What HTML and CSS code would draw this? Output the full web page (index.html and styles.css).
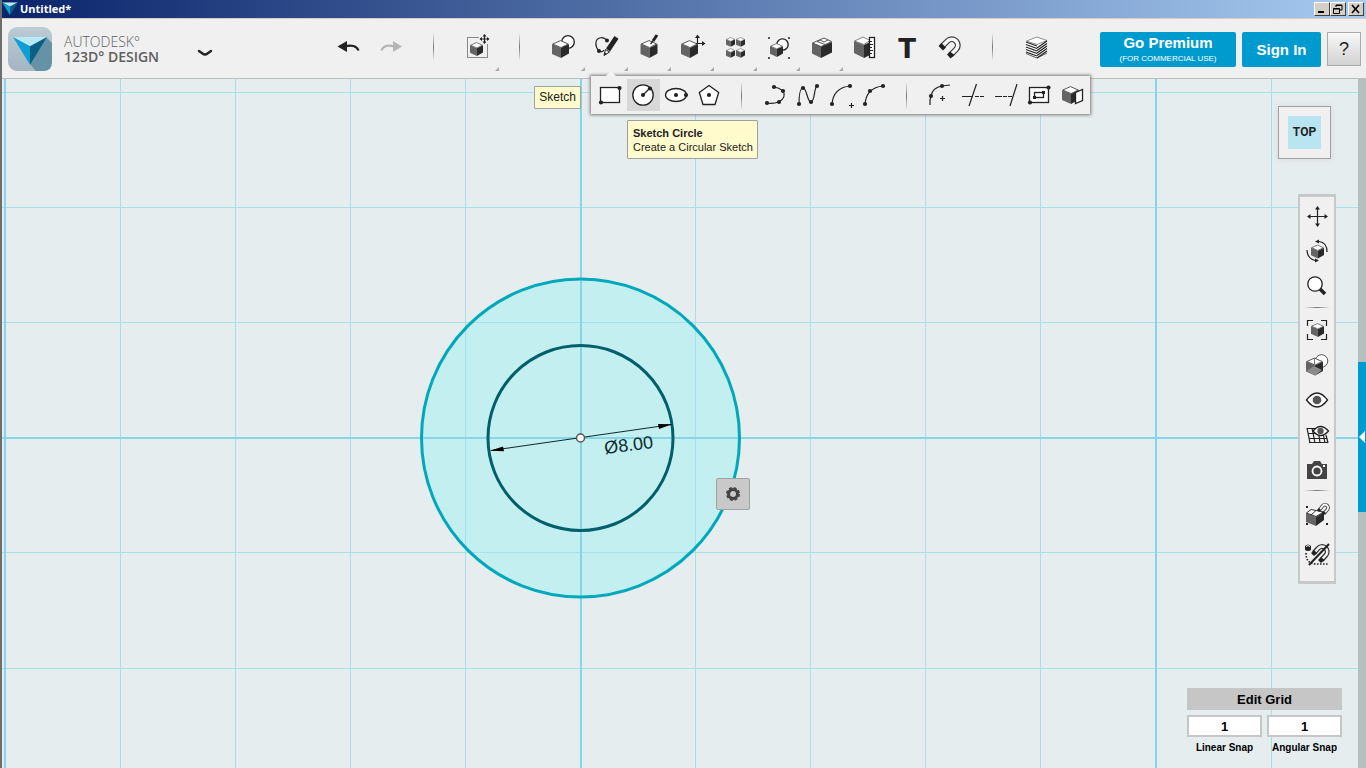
FILE: index.html
```html
<!DOCTYPE html>
<html lang="en">
<head>
<meta charset="utf-8">
<title>Untitled*</title>
<link rel="stylesheet" href="styles.css">
</head>
<body>
<svg class="sprite" aria-hidden="true">
  <defs>
    <symbol id="cube" viewBox="0 0 17 18">
      <path d="M0 4 9 8V18L0 14Z" fill="#646464"/>
      <path d="M9 8 17 4V13.500L9 18Z" fill="#2a2a2a"/>
      <path d="M.8 4 8.500.6 16.200 4 9 7.600Z" fill="#fff" stroke="#444" stroke-width=".9"/>
    </symbol>
    <symbol id="gem" viewBox="0 0 44 44">
      <path d="M0 0H44L22 12Z" fill="#b9e8f7"/>
      <path d="M0 0 22 12V36Z" fill="#0c9fd3"/>
      <path d="M44 0 22 12V36Z" fill="#0b5f84"/>
    </symbol>
    <linearGradient id="tile" x1="0" y1="0" x2="0" y2="1">
      <stop offset="0" stop-color="#bccbd5"/><stop offset="1" stop-color="#a3b5c1"/>
    </linearGradient>
  </defs>
</svg>

<div class="window">
  <header class="titlebar">
    <svg class="title-gem" viewBox="0 0 44 37" aria-hidden="true"><use href="#gem" width="44" height="44"/></svg>
    <span class="title">Untitled*</span>
    <div class="win-buttons">
      <button class="win" aria-label="Minimize"><svg viewBox="0 0 12 10"><path d="M2 8H8" stroke="#000" stroke-width="2"/></svg></button>
      <button class="win" aria-label="Restore"><svg viewBox="0 0 12 10"><path d="M4 3V1H10V6H8M4 1.500H10" fill="none" stroke="#000"/><path d="M1.500 4.500H7.500V9.500H1.500ZM1.500 5H7.500" fill="none" stroke="#000"/></svg></button>
      <button class="win win-close" aria-label="Close"><svg viewBox="0 0 12 10"><path d="M2 1 9 9M9 1 2 9" stroke="#000" stroke-width="1.600"/></svg></button>
    </div>
  </header>

  <div class="toolbar">
    <div class="brand">
      <svg class="logo" viewBox="0 0 44 44" aria-hidden="true">
        <rect width="44" height="44" rx="9" fill="url(#tile)"/>
        <path d="M38 10 44 16V35Q44 44 35 44H28L22 37Z" fill="#6593a5"/>
        <use href="#gem" x="5" y="10" width="34" height="34"/>
      </svg>
      <div class="brand-text">
        <span class="brand-top">AUTODESK°</span>
        <span class="brand-main">123D° DESIGN</span>
      </div>
      <button class="chevron" aria-label="Main menu"><svg viewBox="0 0 16 8"><path d="M2 2 5.500 4.500Q8 6.500 10.500 4.500L14 2" fill="none" stroke="#222" stroke-width="2.400" stroke-linecap="round"/></svg></button>
    </div>

    <nav class="tools" aria-label="Tools">
      <button class="tool" aria-label="Undo"><svg viewBox="0 0 33 33"><path d="M13 15.500C19 13.500 25 15 26.500 19.500" class="k2"/><path d="M5.500 15.500 15 10V21Z" class="f"/></svg></button>
      <button class="tool dim" aria-label="Redo"><svg viewBox="0 0 33 33"><path d="M19 15.500C13 13.500 8 15 6.500 19.500" class="k2"/><path d="M27 15.500 18 10V21Z" class="f"/></svg></button>
      <span class="rule"></span>
      <button class="tool more" aria-label="Transform"><svg viewBox="0 0 33 33"><rect x="6.500" y="6.500" width="20" height="20" fill="none" stroke="#222" stroke-dasharray="1 1"/><path d="M18 2H29V13H18Z" fill="#f0f0f0"/><use href="#cube" x="9" y="11" width="13" height="14"/><path d="M23.500 4V12M19.500 8H27.500" class="k"/><path d="M23.500 3 25.500 5.500H21.500ZM23.500 13 25.500 10.500H21.500ZM18.500 8 21 6V10ZM28.500 8 26 6V10Z" class="f"/></svg></button>
      <span class="rule"></span>
      <button class="tool more" aria-label="Primitives"><svg viewBox="0 0 33 33"><circle cx="21" cy="11" r="6.300" class="w"/><use href="#cube" x="5" y="9" width="17" height="18"/></svg></button>
      <div class="tool-slot">
        <button class="tool more" aria-label="Sketch"><svg viewBox="0 0 33 33"><path d="M17 10C14 5 7 6 6 11C5.500 15 7 18 9 20C11 21 13 21 14 19" class="k"/><circle cx="17" cy="9.500" r="2" class="f"/><circle cx="9" cy="20" r="2" class="f"/><path d="M14 24.500 15.500 18.500 19.500 21Z" fill="#fff" stroke="#222"/><path d="M14 24.500 14.800 21.500 17 23ZM16 17.500 24.500 5 28.500 7.800 20 20.500Z" class="f"/></svg></button>
        <span class="tip tip-sketch" role="tooltip">Sketch</span>
        <div class="submenu" role="toolbar" aria-label="Sketch tools">
          <button class="sub" aria-label="Sketch Rectangle"><svg viewBox="0 0 33 33"><rect x="6.500" y="8.500" width="19" height="15" class="w"/><circle cx="25.500" cy="9" r="2.100" class="f"/><circle cx="7" cy="23.500" r="2.100" class="f"/></svg></button>
          <button class="sub active" aria-label="Sketch Circle"><svg viewBox="0 0 33 33"><circle cx="16" cy="16" r="10.200" class="w"/><path d="M16 16 22.500 9.500" class="k"/><circle cx="16" cy="16" r="2.100" class="f"/><circle cx="23" cy="9.500" r="2.100" class="f"/></svg></button>
          <button class="sub" aria-label="Sketch Ellipse"><svg viewBox="0 0 33 33"><ellipse cx="16" cy="16" rx="10.500" ry="6.500" class="w"/><circle cx="16" cy="16" r="2.100" class="f"/><circle cx="26" cy="16" r="2.100" class="f"/></svg></button>
          <button class="sub" aria-label="Sketch Polygon"><svg viewBox="0 0 33 33"><path d="M16 6.500 25.700 13.500 22 25.500H10L6.300 13.500Z" class="w"/><circle cx="16" cy="16" r="2.100" class="f"/></svg></button>
          <span class="rule"></span>
          <button class="sub" aria-label="Polyline"><svg viewBox="0 0 33 33"><path d="M15 8Q20 8.500 24 12C26.500 16 25 20 20 23Q14 25 8 24" class="k"/><circle cx="15" cy="8" r="2.100" class="f"/><circle cx="24" cy="12" r="2.100" class="f"/><circle cx="20" cy="23" r="2.100" class="f"/><circle cx="8" cy="24" r="2.100" class="f"/></svg></button>
          <button class="sub" aria-label="Spline"><svg viewBox="0 0 33 33"><path d="M7 25C7 18 8 9 11 9C15 9 15 23 19 23C23 23 22 8 25 7" class="k"/><circle cx="7" cy="25" r="2.100" class="f"/><circle cx="11" cy="9" r="2.100" class="f"/><circle cx="19" cy="23" r="2.100" class="f"/><circle cx="25" cy="7" r="2.100" class="f"/></svg></button>
          <button class="sub" aria-label="Two Point Arc"><svg viewBox="0 0 33 33"><path d="M7 25C8 14 15 8 25 7M24 26.500H29M26.500 24V29" class="k"/><circle cx="7" cy="25" r="2.100" class="f"/><circle cx="25" cy="7" r="2.100" class="f"/></svg></button>
          <button class="sub" aria-label="Three Point Arc"><svg viewBox="0 0 33 33"><path d="M7 25C8 14 15 8 25 7" class="k"/><circle cx="7" cy="25" r="2.100" class="f"/><circle cx="12" cy="12" r="2.100" class="f"/><circle cx="25" cy="7" r="2.100" class="f"/></svg></button>
          <span class="rule"></span>
          <button class="sub" aria-label="Fillet"><svg viewBox="0 0 33 33"><path d="M6 26V21L7 17C8 11 12 8 18 7L26 6M16 19.500H21M18.500 17V22" class="k"/><circle cx="7" cy="17" r="2.100" class="f"/><circle cx="18" cy="7" r="2.100" class="f"/></svg></button>
          <button class="sub" aria-label="Trim"><svg viewBox="0 0 33 33"><path d="M5 17.500H16M19.500 5 12 27" class="k"/><path d="M18 17.500H28" class="k" stroke-dasharray="4 1"/></svg></button>
          <button class="sub" aria-label="Extend"><svg viewBox="0 0 33 33"><path d="M5 17.500H12M27 5 20 27" class="k"/><path d="M13 17.500H22" class="k" stroke-dasharray="4 1"/></svg></button>
          <button class="sub" aria-label="Offset"><svg viewBox="0 0 33 33"><rect x="6.500" y="8.500" width="19" height="15" class="w"/><rect x="11.500" y="13.500" width="9" height="5" class="w"/><circle cx="25.500" cy="8.500" r="2.100" class="f"/><circle cx="7" cy="23.500" r="2.100" class="f"/><path d="M10 17H13V20H10ZM19 12H22V15H19Z" class="f"/></svg></button>
          <button class="sub" aria-label="Project"><svg viewBox="0 0 33 33"><use href="#cube" x="6" y="7" width="17" height="18"/><path d="M19.500 13.500 26.500 10.500V21.500L19.500 24.500Z" class="w"/></svg></button>
        </div>
        <div class="tip tip-circle" role="tooltip"><b>Sketch Circle</b><span>Create a Circular Sketch</span></div>
      </div>
      <button class="tool more" aria-label="Construct"><svg viewBox="0 0 33 33"><use href="#cube" x="7" y="9" width="18" height="18"/><path d="M24 4 20 10" stroke="#222" stroke-width="3"/><path d="M20 10 17.500 13" class="k"/></svg></button>
      <button class="tool more" aria-label="Modify"><svg viewBox="0 0 33 33"><use href="#cube" x="5" y="9" width="17" height="18"/><path d="M21.500 13V6M20 12.500H27" class="k"/><path d="M21.500 3.500 24 7H19ZM29.500 12.500 26 10V15Z" class="f"/></svg></button>
      <button class="tool more" aria-label="Pattern"><svg viewBox="0 0 33 33"><use href="#cube" x="7" y="6" width="9" height="10"/><use href="#cube" x="17" y="6" width="9" height="10"/><use href="#cube" x="7" y="17" width="9" height="10"/><use href="#cube" x="17" y="17" width="9" height="10"/></svg></button>
      <button class="tool more" aria-label="Grouping"><svg viewBox="0 0 33 33"><circle cx="20.500" cy="13.500" r="5.700" class="w"/><use href="#cube" x="8" y="12" width="13" height="14"/><path d="M6 6H8V8H6ZM26 6H28V8H26ZM6 26H8V28H6ZM26 26H28V28H26Z" fill="#555"/></svg></button>
      <button class="tool more" aria-label="Combine"><svg viewBox="0 0 33 33"><path d="M7 12 16 15.500V27L7 22.500Z" fill="#646464"/><path d="M16 15.500 27 11V21.500L16 27Z" fill="#2a2a2a"/><path d="M7.500 12 19 7 26.500 10.500 16 15.500Z" fill="#fff" stroke="#444" stroke-width=".9"/><path d="M12 10.500 20 13.500M12 10.500 15 9 19 11 23 9" fill="none" stroke="#444" stroke-width=".9"/></svg></button>
      <button class="tool" aria-label="Measure"><svg viewBox="0 0 33 33"><path d="M6 10 16 14V27L6 22Z" fill="#646464"/><path d="M16 14 22 11V24L16 27Z" fill="#2a2a2a"/><path d="M6.500 10 15 6 22 9.500 16 13.500Z" fill="#fff" stroke="#666" stroke-width=".8"/><rect x="21.500" y="6.500" width="5" height="20" class="w"/><path d="M22 10.500H24M22 13.500H25M22 16.500H24M22 19.500H25M22 22.500H24" class="k"/></svg></button>
      <button class="tool" aria-label="Text"><svg viewBox="0 0 33 33"><text x="16" y="27" class="t-icon">T</text></svg></button>
      <button class="tool" aria-label="Snap"><svg viewBox="0 0 33 33"><path d="M8 15.500 13.500 10A6 6 0 0 1 22 18.500L16.500 24" fill="none" stroke="#3a3a3a" stroke-width="6"/><path d="M8 15.500 13.500 10A6 6 0 0 1 22 18.500L16.500 24" fill="none" stroke="#f8f8f8" stroke-width="3.600"/><path d="M4.500 15 7.500 12 12 16.500 9 19.500ZM13 23.500 16 20.500 20.500 24 16.500 27.500Z" class="f"/></svg></button>
      <span class="rule"></span>
      <button class="tool" aria-label="Material"><svg viewBox="0 0 33 33"><path d="M6 10 17 14 27 10V22L17 27 6 22Z" fill="#fff"/><path d="M6.500 10 17 6 27 9.500 17 13.500Z" fill="#fff" stroke="#777" stroke-width=".8"/><path d="M6 11 17 15M6 13.500 17 17.500M6 16 17 20M6 18.500 17 22.500M6 21 17 25" fill="none" stroke="#222" stroke-width="1.300"/><path d="M17 17 27 10M17 19.500 27 12.500M17 22 27 15M17 24.500 27 17.500M17 27 27 20" fill="none" stroke="#222" stroke-width="1.300"/><path d="M6 22.500 17 27 27 22" fill="none" stroke="#333" stroke-width=".8"/></svg></button>
    </nav>

    <div class="account">
      <button class="cta premium"><b>Go Premium</b><span>(FOR COMMERCIAL USE)</span></button>
      <button class="cta signin">Sign In</button>
      <button class="help" aria-label="Help">?</button>
    </div>
  </div>

  <main class="stage">
    <div class="canvas">
      <svg class="drawing" role="img" aria-label="Sketch with two concentric circles">
        <g class="fills"><circle cx="578.500" cy="359" r="159" /></g>
        <g class="minor">
          <path d="M118.500 0V2000M233.500 0V2000M348.500 0V2000M463.500 0V2000M693.500 0V2000M808.500 0V2000M923.500 0V2000M1038.500 0V2000M1269.500 0V2000"/>
          <path d="M0 13.500H3000M0 128.500H3000M0 243.500H3000M0 473.500H3000M0 589.500H3000"/>
        </g>
        <path class="major" d="M3 0V2000M579 0V2000M1154 0V2000M0 359H3000"/>
        <circle class="outer" cx="578.500" cy="359" r="159"/>
        <circle class="inner" cx="578.500" cy="359" r="92.500"/>
        <path d="M489 371.500 670 345.500" stroke="#0b2a2e"/>
        <path d="M488 371.800 501 367.500 502 372.300ZM670 345.300 656 345 657 350Z" fill="#000"/>
        <circle cx="578.500" cy="359" r="4" fill="#fff" stroke="#555" stroke-width="1.500"/>
        <text class="dim-text" transform="translate(603 375) rotate(-7)">Ø8.00</text>
      </svg>

      <button class="gear" aria-label="Settings"><svg viewBox="0 0 16 16"><circle cx="8" cy="8" r="4.500" fill="none" stroke="#444" stroke-width="3"/><circle cx="8" cy="8" r="6.200" fill="none" stroke="#444" stroke-width="1.600" stroke-dasharray="2.900 1.970"/></svg></button>

      <button class="viewcube"><span>TOP</span></button>

      <div class="navbar" role="toolbar" aria-label="View">
        <button aria-label="Pan"><svg viewBox="0 0 33 33"><path d="M17.500 8V25M9 16.500H26" class="k"/><path d="M17.500 6 20 9.500H15ZM17.500 27 20 23.500H15ZM7 16.500 10.500 14V19ZM28 16.500 24.500 14V19Z" class="f"/></svg></button>
        <button aria-label="Orbit"><svg viewBox="0 0 33 33"><use href="#cube" x="11" y="9" width="13" height="15"/><path d="M19 6.500C24 7 27 11 27 17M7 15C7 21 10 24 15 25.500" class="k"/><path d="M15 6.500 19 4.500V8.500ZM19 25.500 15 23.500V27.500Z" class="f"/></svg></button>
        <button aria-label="Zoom"><svg viewBox="0 0 33 33"><circle cx="15" cy="14" r="7.200" class="w"/><path d="M20 19 25 24" stroke="#222" stroke-width="3.600"/></svg></button>
        <span class="hrule"></span>
        <button aria-label="Fit"><svg viewBox="0 0 33 33"><use href="#cube" x="11" y="10" width="13" height="14"/><path d="M7.500 13V7.500H13M21 7.500H26.500V13M26.500 21V26.500H21M13 26.500H7.500V21" class="k"/></svg></button>
        <button aria-label="Visual Style"><svg viewBox="0 0 33 33"><circle cx="21.500" cy="13" r="6.300" fill="#fff" stroke="#555"/><use href="#cube" x="6" y="9" width="17" height="19"/><path d="M6.500 23 14 18 22 22 15 27.500Z" fill="#8a8a8a"/><path d="M14.500 10V18" stroke="#777"/></svg></button>
        <button aria-label="Visibility"><svg viewBox="0 0 33 33"><path d="M6.500 17Q17 3 27.500 17Q17 31 6.500 17Z" class="w"/><circle cx="17" cy="17" r="4.300" fill="#555"/></svg></button>
        <button aria-label="Grid Visibility"><svg viewBox="0 0 33 33"><path d="M7 10.500H22M8 15.500H26M9 20.500H27M9 24.500H28M7 10 10 25M12 10 15 25M18 10 20 25M23 15 25 25M26 17 28 25" class="k"/><path d="M13 13Q20.500 4 28.500 13Q20.500 22 13 13Z" class="w"/><circle cx="20.500" cy="13" r="3.200" fill="#555"/></svg></button>
        <button aria-label="Screenshot"><svg viewBox="0 0 33 33"><path d="M7 11H12L14 8H20L22 11H27V26H7Z" fill="#444"/><circle cx="17" cy="18" r="4.500" fill="none" stroke="#fff" stroke-width="1.800"/><path d="M23 12H25V14H23Z" fill="#fff"/></svg></button>
        <span class="hrule"></span>
        <button class="tall" aria-label="Snap to grid"><svg viewBox="0 0 33 33"><path d="M6 15 16 19V28L6 24Z" fill="#646464"/><path d="M16 19 24 14V22L16 28Z" fill="#2a2a2a"/><path d="M6.500 15 11 11.500 23.500 14 16 18.500ZM11 17 16 12.500" fill="#fff" stroke="#333"/><path d="M19 12.500 22.500 8A3 3 0 0 1 27.500 11.500L24 15.500" fill="none" stroke="#444" stroke-width="3.600"/><path d="M19 12.500 22.500 8A3 3 0 0 1 27.500 11.500L24 15.500" fill="none" stroke="#fff" stroke-width="1.800"/><path d="M17 12 19 10 21 12 19 14ZM21.500 15 23.500 13 26 15 24 17ZM6 8H8V10H6ZM6 25H8V27H6ZM26 25H28V27H26Z" class="f"/></svg></button>
        <button class="tall" aria-label="Snapping off"><svg viewBox="0 0 33 33"><path d="M5 9Q8 6 11 9V13Q8 15 5 13Z" class="f"/><path d="M6 9.500Q8 7.500 10 9.500" stroke="#fff" fill="none"/><path d="M6 16C6 23 9 27 16 27H28" fill="none" stroke="#222" stroke-width="1.600" stroke-dasharray="1.500 1.500"/><path d="M14 16 18 11.500A5 5 0 0 1 26 18L21.500 23" fill="none" stroke="#333" stroke-width="5"/><path d="M14 16 18 11.500A5 5 0 0 1 26 18L21.500 23" fill="none" stroke="#f0f0f0" stroke-width="2.600"/><path d="M11 16 14 13 17 16 14 19ZM18 23 21 20 24.500 23 21 26Z" class="f"/><path d="M29 7 9 28" stroke="#222" stroke-width="2"/></svg></button>
      </div>

      <section class="grid-panel">
        <button class="edit-grid">Edit Grid</button>
        <div class="snap">
          <input id="linear" value="1"><label for="linear">Linear Snap</label>
        </div>
        <div class="snap">
          <input id="angular" value="1"><label for="angular">Angular Snap</label>
        </div>
      </section>
    </div>
    <aside class="edge">
      <button class="edge-tab" aria-label="Open panel"><svg viewBox="0 0 8 12"><path d="M1 6 7 0V12Z" fill="#fff"/></svg></button>
    </aside>
  </main>
</div>
</body>
</html>
```
FILE: styles.css
```css
* { box-sizing: border-box; }
body { margin: 0; font-family: "Liberation Sans", Arial, sans-serif; color: #222; }
button { margin: 0; padding: 0; border: 0; background: none; font: inherit; color: inherit; }
svg { display: block; }
.sprite { position: absolute; width: 0; height: 0; }

.window { display: flex; flex-direction: column; height: 100vh; overflow: hidden; border-left: 2px solid #6e6e6e; }

/* Title bar */
.titlebar { display: flex; align-items: center; height: 19px; padding-right: 2px; border-bottom: 1px solid #d4cdc2; background: linear-gradient(to right, #0a246a, #a6caf0); }
.title-gem { width: 16px; height: 14px; }
.title { flex: 1; padding-left: 2px; color: #fff; font: bold 11px/16px "Open Sans", sans-serif; }
.win-buttons { display: flex; }
.win { display: grid; place-items: center; width: 16px; height: 14px; background: #d4d0c8; border: 1px solid; border-color: #fff #404040 #404040 #fff; }
.win svg { width: 12px; height: 10px; }
.win-close { margin-left: 2px; }

/* Toolbar */
.toolbar { display: flex; align-items: flex-start; flex: none; height: 60px; padding: 8px 5px 0 6px; background: #f0f0f0; border-bottom: 1px solid #bdbdbd; }
.brand { display: flex; align-items: center; width: 319px; }
.logo { width: 44px; height: 44px; }
.brand-text { display: flex; flex-direction: column; padding-left: 12px; width: 145px; color: #5f5f5f; font-family: "Open Sans", sans-serif; font-size: 14px; line-height: 15px; }
.brand-top { font-weight: 300; }
.brand-main { font-weight: 600; }
.chevron { padding: 8px 0 0; }
.chevron svg { width: 16px; height: 8px; }

.tools { display: flex; flex: 1; }
.tool, .tools > .rule { flex: none; width: 43px; height: 44px; }
.tool { position: relative; display: grid; justify-items: center; align-content: start; padding-top: 4px; }
.tool svg { width: 33px; height: 33px; }
.more::after { content: ""; position: absolute; right: 0; bottom: 0; border: 2px solid; border-color: transparent #a8a8a8 #a8a8a8 transparent; }
.dim .f { fill: #b5b5b5; }
.dim .k2 { stroke: #b5b5b5; }
.f { fill: #222; }
.k { fill: none; stroke: #222; stroke-width: 1.2; }
.k2 { fill: none; stroke: #222; stroke-width: 2.2; }
.w { fill: #fff; stroke: #222; stroke-width: 1.3; }
.t-icon { font: bold 26px "DejaVu Sans", sans-serif; text-anchor: middle; fill: #222; }
.rule { display: block; background: linear-gradient(transparent, #777 50%, transparent) 20px 6px / 1px 28px no-repeat; }

.tool-slot { position: relative; z-index: 5; }
.submenu { position: absolute; left: 6px; top: 49px; display: flex; padding: 3px 1px 3px 3px; background: #f0f0f0; box-shadow: 0 0 3px 1px #777; }
.submenu::before { content: ""; position: absolute; left: 15px; top: -5px; border: 5px solid transparent; border-top: 0; border-bottom-color: #f4f4f4; }
.sub { width: 33px; height: 32px; }
.sub svg { width: 33px; height: 33px; }
.active { background: #d8d8d8; }
.submenu .rule { width: 33px; height: 32px; background-position: 15px 3px; }
.tip { position: absolute; background: #fffbcc; border: 1px solid #a0a0a0; border-radius: 1px; color: #222; white-space: nowrap; }
.tip-sketch { right: 47px; top: 59px; padding: 2px 4px; font-size: 12px; line-height: 17px; }
.tip-circle { left: 42px; top: 93px; display: flex; flex-direction: column; padding: 5px 4px 4px 5px; font-size: 11px; line-height: 14px; }

.account { display: flex; gap: 6px; padding-top: 5px; }
.cta { height: 35px; border-radius: 2px; background: #009bce; color: #fff; font-weight: bold; font-size: 15px; line-height: 17px; }
.premium { display: flex; flex-direction: column; align-items: center; width: 136px; padding-top: 2px; }
.premium span { font-size: 8px; font-weight: normal; line-height: 15px; }
.signin { width: 79px; }
.help { width: 34px; height: 34px; border: 1px solid #aaa; background: linear-gradient(#f8f8f8, #d2d2d2); font-size: 18px; }

/* Drawing area */
.stage { display: flex; flex: 1; min-height: 0; }
.canvas { position: relative; flex: 1; overflow: hidden; background: #e6edef; }
.drawing { position: absolute; inset: 0; width: 100%; height: 100%; }
.fills { fill: #c3eff0; }
.minor { fill: none; stroke: #a9deeb; }
.major { fill: none; stroke: #85d6e9; stroke-width: 2; }
.outer { fill: none; stroke: #00a8bb; stroke-width: 3; }
.inner { fill: none; stroke: #005f6a; stroke-width: 3; }
.dim-text { font: 18px "Liberation Sans", Arial, sans-serif; fill: #0b2a2e; }
.gear { position: absolute; left: 714px; top: 399px; display: grid; place-items: center; width: 34px; height: 32px; background: #c9c9c9; border: 1px solid #a2a2a2; border-radius: 2px; }
.gear svg { width: 16px; height: 16px; }

.viewcube { position: absolute; right: 27px; top: 27px; display: grid; place-items: center; width: 53px; height: 53px; background: #f0f0f0; border: 1px solid #a0a0a0; box-shadow: 0 0 6px #d5dadb; }
.viewcube span { width: 33px; background: #b9e5f3; font: bold 12px/33px Roboto, sans-serif; }

.navbar { position: absolute; right: 22px; top: 115px; display: flex; flex-direction: column; width: 38px; padding: 2px 0 8px; background: #f0f0f0; border: 2px solid #c8c8c8; border-top-width: 3px; border-bottom-width: 3px; }
.navbar button { display: grid; align-items: center; height: 35px; }
.navbar .tall { height: 39px; }
.navbar svg { width: 33px; height: 33px; }
.hrule { height: 8px; background: linear-gradient(to right, transparent, #777 50%, transparent) center 3px / 26px 1px no-repeat; }

.grid-panel { position: absolute; right: 16px; bottom: 14px; display: grid; grid-template-columns: 75px 75px; gap: 5px; }
.edit-grid { grid-column: 1 / -1; height: 22px; background: #c6c6c6; color: #000; font-size: 13px; font-weight: bold; }
.snap { display: flex; flex-direction: column; align-items: center; }
.snap input { width: 100%; height: 22px; padding: 0; border: 2px solid #c6c6c6; background: #fff; color: #000; font: bold 13px "Liberation Sans", Arial, sans-serif; text-align: center; }
.snap label { padding-top: 4px; color: #000; font-size: 10px; font-weight: bold; line-height: 13px; white-space: nowrap; }

.edge { display: flex; flex-direction: column; width: 8px; padding-top: 283px; background: #b5bfbe; }
.edge-tab { display: grid; place-items: center; height: 150px; background: #009bce; }
.edge-tab svg { width: 8px; height: 12px; }
```
